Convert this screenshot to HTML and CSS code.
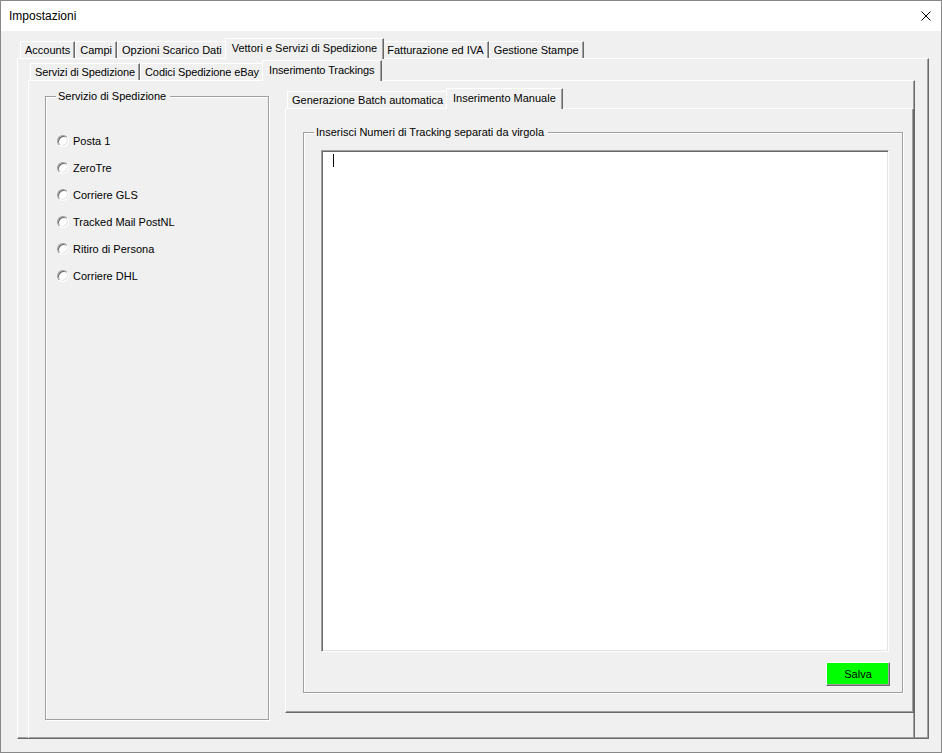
FILE: index.html
```html
<!DOCTYPE html>
<html lang="it">

<head>
  <meta charset="UTF-8">
  <meta name="viewport" content="width=device-width, initial-scale=1.0">
  <title>Impostazioni</title>
  <link rel="stylesheet" href="styles.css">
</head>

<body>
  <div class="window">
    <div class="titlebar">
      <span class="title">Impostazioni</span>
      <svg class="close" viewBox="0 0 10 10">
        <path d="M0.5 0.5L9.5 9.5M9.5 0.5L0.5 9.5" stroke="#000" stroke-width="1" fill="none" />
      </svg>
    </div>

    <div class="client">
      <div class="tabctl tabctl-main">
        <div class="tabrow">
          <div class="tab">Accounts</div>
          <div class="tab">Campi</div>
          <div class="tab">Opzioni Scarico Dati</div>
          <div class="tab active">Vettori e Servizi di Spedizione</div>
          <div class="tab">Fatturazione ed IVA</div>
          <div class="tab">Gestione Stampe</div>
        </div>
        <div class="tabpanel panel-main">

          <div class="tabctl tabctl-sub">
            <div class="tabrow">
              <div class="tab">Servizi di Spedizione</div>
              <div class="tab">Codici Spedizione eBay</div>
              <div class="tab active">Inserimento Trackings</div>
            </div>
            <div class="tabpanel panel-sub">

              <div class="group group-services">
                <span class="group-title">Servizio di Spedizione</span>
                <ul class="radio-list">
                  <li class="radio-item"><span class="radio"></span>Posta 1</li>
                  <li class="radio-item"><span class="radio"></span>ZeroTre</li>
                  <li class="radio-item"><span class="radio"></span>Corriere GLS</li>
                  <li class="radio-item"><span class="radio"></span>Tracked Mail PostNL</li>
                  <li class="radio-item"><span class="radio"></span>Ritiro di Persona</li>
                  <li class="radio-item"><span class="radio"></span>Corriere DHL</li>
                </ul>
              </div>

              <div class="tabctl tabctl-track">
                <div class="tabrow">
                  <div class="tab">Generazione Batch automatica</div>
                  <div class="tab active">Inserimento Manuale</div>
                </div>
                <div class="tabpanel panel-track">
                  <div class="group group-tracking">
                    <span class="group-title">Inserisci Numeri di Tracking separati da virgola</span>
                    <div class="textbox"><span class="caret"></span></div>
                    <button class="btn-save">Salva</button>
                  </div>
                </div>
              </div>

            </div>
          </div>

        </div>
      </div>
    </div>
  </div>
</body>

</html>
```

FILE: styles.css
```css
body {
  margin: 0;
  background: #f0f0f0;
  font-family: "Liberation Sans", Arial, sans-serif;
  font-size: 11px;
  color: #000;
}

.window {
  width: 942px;
  height: 753px;
  box-sizing: border-box;
  border: 1px solid #888;
  background: #f0f0f0;
  display: flex;
  flex-direction: column;
}

.titlebar {
  height: 30px;
  flex-shrink: 0;
  background: #fff;
  display: flex;
  align-items: center;
  justify-content: space-between;
  padding: 0 10px 0 8px;
}

.title {
  font-size: 12px;
}

.close {
  width: 10px;
  height: 10px;
}

.client {
  flex: 1;
  padding: 7px 0 0 16px;
}

/* tab controls */
.tabctl {
  display: flex;
  flex-direction: column;
}

.tabrow {
  display: flex;
  align-items: flex-end;
  height: 21px;
  margin-bottom: -1px;
  padding-left: 2px;
  position: relative;
  z-index: 1;
}

.tab {
  height: 17px;
  box-sizing: border-box;
  margin-bottom: 1px;
  padding: 0 4px;
  line-height: 16px;
  white-space: nowrap;
  background: #f0f0f0;
  border-top: 1px solid #fff;
  border-left: 1px solid #fff;
  border-right: 1px solid #696969;
  box-shadow: inset -1px 0 #a0a0a0;
}

.tab.active {
  height: 21px;
  margin: 0 -2px;
  padding: 0 6px 2px;
  line-height: 18px;
  position: relative;
  z-index: 1;
}

.tabpanel {
  flex: 1;
  box-sizing: border-box;
  border: 1px solid;
  border-color: #fff #696969 #696969 #fff;
  box-shadow: inset -1px -1px #a0a0a0;
}

.tabctl-main {
  width: 912px;
  height: 701px;
}

.tabctl-main > .tabrow {
  padding-left: 3px;
}

.panel-main {
  display: flex;
  flex-direction: column;
}

.tabctl-sub {
  flex: 1;
  width: 887px;
  margin: 1px 0 0 10px;
}

.tabctl-sub > .tabrow {
  letter-spacing: -0.1px;
}

.panel-sub {
  border-bottom: none;
  box-shadow: inset -1px 0 #a0a0a0;
  display: flex;
  align-items: flex-start;
  padding: 7px 0 0 16px;
}

.tabctl-track {
  width: 629px;
  height: 625px;
  margin-left: 16px;
}

.panel-track {
  padding: 23px 0 0 17px;
}

/* group boxes */
.group {
  position: relative;
  box-sizing: border-box;
  border: 1px solid #a0a0a0;
  box-shadow: inset 1px 1px #fff, 1px 1px #fff;
}

.group-title {
  position: absolute;
  top: -8px;
  left: 10px;
  padding: 0 4px 0 2px;
  line-height: 14px;
  background: #f0f0f0;
  white-space: nowrap;
}

.group-services {
  width: 224px;
  height: 624px;
  margin-top: 8px;
  padding: 30px 0 0 11px;
}

.radio-list {
  list-style: none;
  margin: 0;
  padding: 0;
}

.radio-item {
  display: flex;
  align-items: center;
  gap: 4px;
  height: 27px;
}

.radio {
  width: 12px;
  height: 12px;
  box-sizing: border-box;
  border-radius: 50%;
  border: 1px solid;
  border-color: #a0a0a0 #fff #fff #a0a0a0;
  background: #fff;
  box-shadow: inset 1px 1px #696969, inset -1px -1px #e3e3e3;
}

.group-tracking {
  width: 600px;
  height: 561px;
  padding: 17px 13px 0 17px;
  display: flex;
  flex-direction: column;
}

.textbox {
  height: 502px;
  box-sizing: border-box;
  background: #fff;
  border: 1px solid;
  border-color: #a0a0a0 #fff #fff #a0a0a0;
  box-shadow: inset 1px 1px #696969, inset -1px -1px #e3e3e3;
  padding: 3px 0 0 11px;
}

.caret {
  display: block;
  width: 1px;
  height: 13px;
  background: #000;
}

.btn-save {
  align-self: flex-end;
  width: 64px;
  height: 24px;
  margin: 10px -1px 0 0;
  padding: 0;
  font: inherit;
  color: #000;
  background: #00ff00;
  border: 1px solid;
  border-color: #fff #696969 #696969 #fff;
  box-shadow: inset -1px -1px #a0a0a0;
}
```
